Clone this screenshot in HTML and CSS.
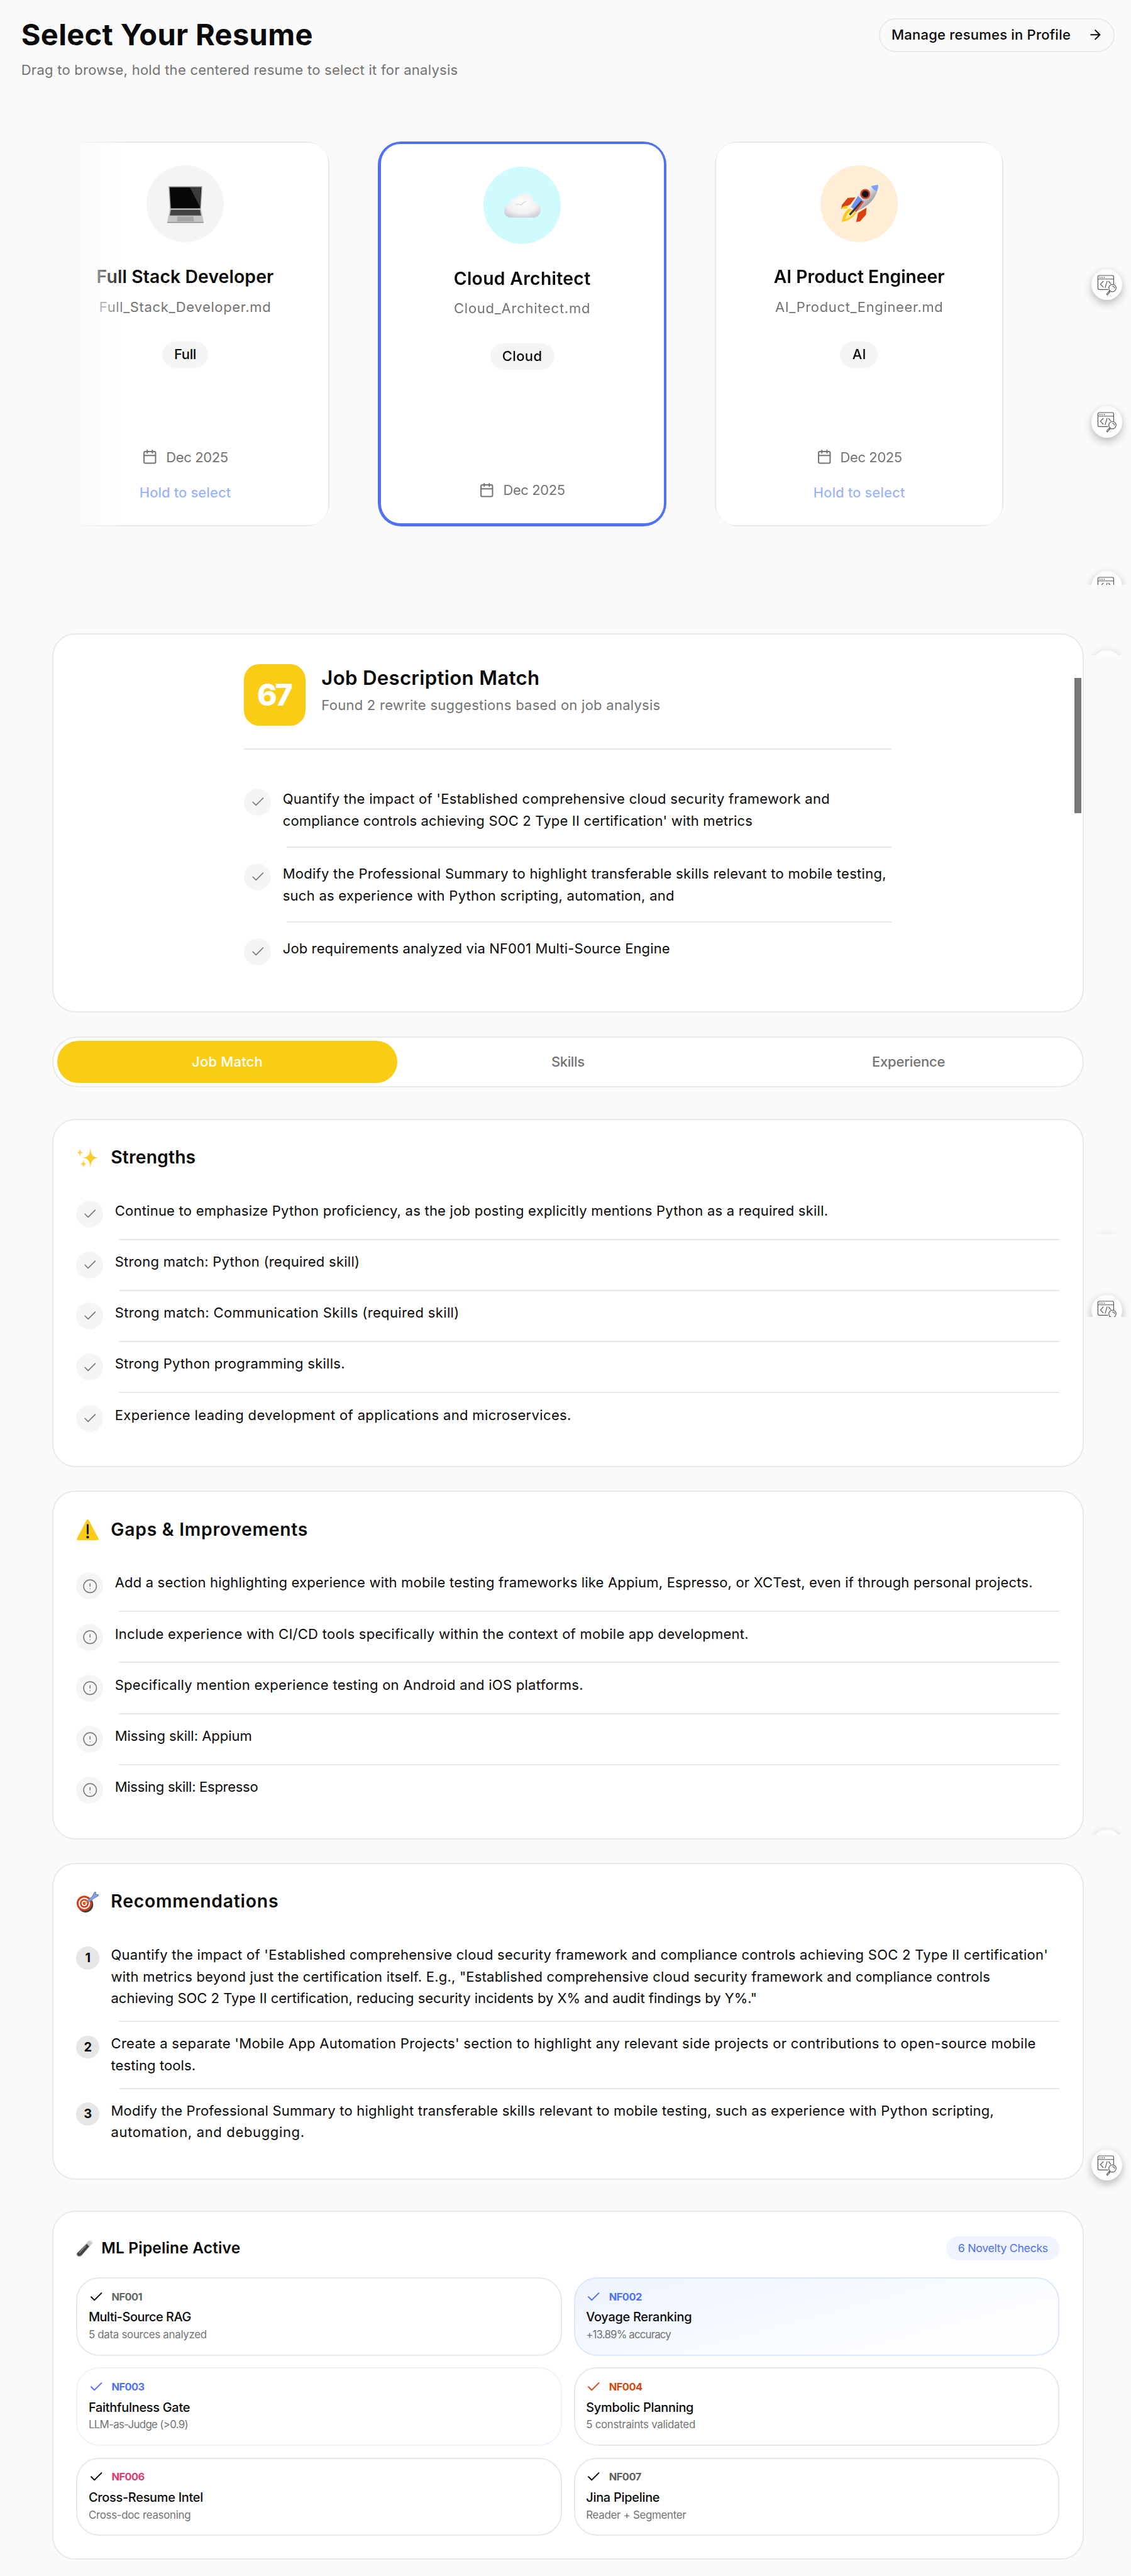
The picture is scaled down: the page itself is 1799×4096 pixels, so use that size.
FILE: index.html
```html
<!DOCTYPE html>
<html lang="en">
<head>
<meta charset="utf-8">
<title>Select Your Resume</title>
<link rel="stylesheet" href="styles.css">
</head>
<body>
<svg class="defs" width="0" height="0" aria-hidden="true">
  <symbol id="check" viewBox="0 0 24 24"><path d="M20 6 9 17l-5-5"/></symbol>
  <symbol id="alert" viewBox="0 0 24 24"><circle cx="12" cy="12" r="10"/><path d="M12 8v4M12 16h.01"/></symbol>
  <symbol id="calendar" viewBox="0 0 24 24"><rect x="3" y="4" width="18" height="18" rx="2"/><path d="M8 2v4M16 2v4M3 10h18"/></symbol>
  <symbol id="inspect" viewBox="0 0 64 64">
    <path d="M34 42H16.500q-3 0-3-3V16q0-3 3-3h26.500q3 0 3 3v15M13.500 20.500h32.500"/>
    <path d="M17.500 17h.1M22 17h.1M26.500 17h.1" stroke-width="2.200"/>
    <path d="m24.500 25-6 6 6 6M32.500 24.500 28.500 38M35.500 25l4.500 5"/>
    <circle cx="43.500" cy="39" r="7.500"/>
    <path d="M43.500 35a4 4 0 0 1 4 4M38 44.500l-2 2M36.500 45.500l-4.500 5q-1 2 1 2.500l5.500-6z"/>
  </symbol>
</svg>

<header class="header">
  <div>
    <h1 class="header-title">Select Your Resume</h1>
    <p class="header-sub">Drag to browse, hold the centered resume to select it for analysis</p>
  </div>
  <a class="manage"><span>Manage resumes in Profile</span>
    <svg class="icon arrow" viewBox="0 0 24 24"><path d="M5 12h14M12 5l7 7-7 7"/></svg>
  </a>
</header>

<section class="carousel">
  <article class="resume">
    <div class="resume-body">
      <div class="avatar avatar-gray">
        <svg viewBox="0 0 60 60" width="62" height="62">
          <path d="M4 3h52l-2 35H6z" fill="#a9a9a9"/><path d="M5.500 4.500h49L52.500 37h-45z" fill="#080808"/>
          <path d="M37 5h17L52 34z" fill="#3b3b3b"/>
          <path d="M6 38h48l4 20q0 1-2 1H4q-2 0-2-1z" fill="#c3c3c3"/>
          <path d="M7.500 39.500h45l1.500 8.500H6z" fill="#2a2a2a"/>
          <path d="M7 41.500h46M6.500 43.700h47M6.200 46h47.600" stroke="#8d8d8d" stroke-width=".6"/>
          <path d="M18 49.500h24l1 7.500H17z" fill="#a6a6a6"/><path d="M2 58h56v1.500H2z" fill="#8e8e8e"/>
        </svg>
      </div>
      <h2 class="resume-title">Full Stack Developer</h2>
      <p class="resume-file">Full_Stack_Developer.md</p>
      <span class="tag k-18">Full</span>
      <div class="date"><svg class="icon"><use href="#calendar"/></svg><span>Dec 2025</span></div>
      <p class="hold">Hold to select</p>
    </div>
  </article>
  <article class="resume resume-active">
    <div class="resume-body">
      <div class="avatar avatar-cyan">
        <svg viewBox="0 0 60 40" width="60" height="52">
          <defs><radialGradient id="cl" cx=".5" cy=".4" r=".7"><stop offset="0" stop-color="#fdfdfd"/><stop offset=".6" stop-color="#f1f1f2"/><stop offset="1" stop-color="#c3c6cf"/></radialGradient></defs>
          <path d="M13 39C5 39 1 35 1 28s5-11 10-11c-1-6 3-10 9-9C22 3 28 0 34 0c8 0 14 6 13 14 8 0 12 5 12 12s-5 13-12 13z" fill="url(#cl)"/>
          <path d="M19 19q4-3 9 0 3-4 8-6" fill="none" stroke="#dadade" stroke-width="1.500"/>
        </svg>
      </div>
      <h2 class="resume-title t-wide">Cloud Architect</h2>
      <p class="resume-file k99">Cloud_Architect.md</p>
      <span class="tag k66">Cloud</span>
      <div class="date"><svg class="icon"><use href="#calendar"/></svg><span>Dec 2025</span></div>
    </div>
  </article>
  <article class="resume">
    <div class="resume-body">
      <div class="avatar avatar-orange">
        <svg viewBox="0 0 60 60" width="62" height="62">
          <defs><linearGradient id="rk" x1="0" y1="0" x2="1" y2="1"><stop offset="0" stop-color="#8d8d90"/><stop offset=".4" stop-color="#ececef"/><stop offset="1" stop-color="#4a4a4f"/></linearGradient></defs>
          <path d="M16 31 2 38l1-6 9-11 12-1z" fill="#d8400f"/><path d="M28 44 25 58l6-1 9-10 1-11z" fill="#d8400f"/>
          <path d="M2 37c3-3 6-4 10-4l-1 5z" fill="#f9cf1c"/>
          <path d="M15 37C8 41 4 49 3 58c9-2 17-6 22-14z" fill="#fac51c"/><path d="M17 40c-5 4-8 9-9 14 6-2 11-5 14-10z" fill="#fde889"/>
          <path d="M59 1C43 2 27 13 17 35q2 5 7 7C45 34 58 20 59 1z" fill="url(#rk)"/>
          <path d="M59 1c-4 0-7 1-11 2q3 6 9 8 2-5 2-10z" fill="#7ba0f6"/>
          <path d="M28 18 17 35l5 3 13-13z" fill="#6c94ee"/>
          <path d="M34 26 15 47" stroke="#34343a" stroke-width="3"/><path d="M36 26 24 42" stroke="#e2482a" stroke-width="2.500"/>
          <circle cx="39" cy="15" r="6.500" fill="#151515" stroke="#da3f20" stroke-width="2.500"/>
        </svg>
      </div>
      <h2 class="resume-title t-tight">AI Product Engineer</h2>
      <p class="resume-file">AI_Product_Engineer.md</p>
      <span class="tag">AI</span>
      <div class="date"><svg class="icon"><use href="#calendar"/></svg><span>Dec 2025</span></div>
      <p class="hold">Hold to select</p>
    </div>
  </article>
  <article class="resume"><div class="resume-body"></div></article>
</section>

<main class="main">
  <section class="panel match">
    <div class="match-inner">
      <div class="match-head">
        <div class="score">67</div>
        <div>
          <h2 class="match-title">Job Description Match</h2>
          <p class="match-sub">Found 2 rewrite suggestions based on job analysis</p>
        </div>
      </div>
      <ul class="list list-wide">
        <li><i class="dot"><svg class="icon"><use href="#check"/></svg></i><p><span class="k54">Quantify the impact of 'Established comprehensive cloud security framework and</span><br><span class="k42">compliance controls achieving SOC 2 Type II certification' with metrics</span></p></li>
        <li><i class="dot"><svg class="icon"><use href="#check"/></svg></i><p>Modify the Professional Summary to highlight transferable skills relevant to mobile testing,<br>such as experience with Python scripting, automation, and</p></li>
        <li><i class="dot"><svg class="icon"><use href="#check"/></svg></i><p class="k37">Job requirements analyzed via NF001 Multi-Source Engine</p></li>
      </ul>
    </div>
    <div class="thumb"></div>
  </section>

  <nav class="tabs">
    <a class="tab tab-active k42">Job Match</a>
    <a class="tab k-18">Skills</a>
    <a class="tab k5">Experience</a>
  </nav>

  <section class="panel">
    <h2 class="panel-title"><svg class="emoji" viewBox="0 0 36 36">
      <path d="M22.500 1c1 11 3 15 12.500 16.500C25.500 19 23.500 23 22.500 34 21.500 23 19.500 19 10 17.500 19.500 16 21.500 12 22.500 1z" fill="#fbcb2a"/>
      <path d="M5.500 2c.5 5 1.500 6.500 5.500 7-4 .6-5 2-5.500 7C5 11 4 9.600 0 9c4-.5 5-2 5.500-7z" fill="#fbcf4a"/>
      <path d="M11 20c.5 5 1.500 7 5.500 7.600-4 .6-5 2.400-5.500 7.400-.5-5-1.500-6.800-5.500-7.400C9.500 27 10.500 25 11 20z" fill="#fbcf4a"/>
    </svg>Strengths</h2>
    <ul class="list">
      <li><i class="dot"><svg class="icon"><use href="#check"/></svg></i><p class="k47">Continue to emphasize Python proficiency, as the job posting explicitly mentions Python as a required skill.</p></li>
      <li><i class="dot"><svg class="icon"><use href="#check"/></svg></i><p>Strong match: Python (required skill)</p></li>
      <li><i class="dot"><svg class="icon"><use href="#check"/></svg></i><p class="k60">Strong match: Communication Skills (required skill)</p></li>
      <li><i class="dot"><svg class="icon"><use href="#check"/></svg></i><p>Strong Python programming skills.</p></li>
      <li><i class="dot"><svg class="icon"><use href="#check"/></svg></i><p class="k60">Experience leading development of applications and microservices.</p></li>
    </ul>
  </section>

  <section class="panel">
    <h2 class="panel-title t-gaps"><svg class="emoji" viewBox="0 0 36 36">
      <path d="M16 2.500q2-3 4 0L35.500 32q1 3-2 3h-31q-3 0-2-3z" fill="#fbcc17"/>
      <path d="M18 10v14" stroke="#1c1c1c" stroke-width="3.200" stroke-linecap="round"/><circle cx="18" cy="30" r="2.200" fill="#1c1c1c"/>
    </svg>Gaps &amp; Improvements</h2>
    <ul class="list">
      <li><i class="dot"><svg class="icon"><use href="#alert"/></svg></i><p class="k42">Add a section highlighting experience with mobile testing frameworks like Appium, Espresso, or XCTest, even if through personal projects.</p></li>
      <li><i class="dot"><svg class="icon"><use href="#alert"/></svg></i><p>Include experience with CI/CD tools specifically within the context of mobile app development.</p></li>
      <li><i class="dot"><svg class="icon"><use href="#alert"/></svg></i><p>Specifically mention experience testing on Android and iOS platforms.</p></li>
      <li><i class="dot"><svg class="icon"><use href="#alert"/></svg></i><p class="k22">Missing skill: Appium</p></li>
      <li><i class="dot"><svg class="icon"><use href="#alert"/></svg></i><p class="k0">Missing skill: Espresso</p></li>
    </ul>
  </section>

  <section class="panel">
    <h2 class="panel-title t-recs"><svg class="emoji" viewBox="0 0 36 36">
      <ellipse cx="14.500" cy="22" rx="12.500" ry="13" fill="#3c3f3c"/>
      <circle cx="12.500" cy="20" r="12.500" fill="#d93a12"/><circle cx="12.500" cy="20" r="9.500" fill="#fff"/><circle cx="12.500" cy="20" r="7.200" fill="#d93a12"/><circle cx="12.500" cy="20" r="4.600" fill="#fff"/><circle cx="12.500" cy="20" r="2.500" fill="#d93a12"/>
      <path d="M12.500 20 28 8" stroke="#d9a520" stroke-width="1.800"/>
      <path d="m17 16 8-7 4-7 2-1 .5 4.500L36 6l-1 2-7 4-8 6z" fill="#7f9fe6" stroke="#5b6783" stroke-width=".8"/>
    </svg>Recommendations</h2>
    <ol class="recs">
      <li><i class="num">1</i><p>Quantify the impact of 'Established comprehensive cloud security framework and compliance controls achieving SOC 2 Type II certification'<br><span class="k43">with metrics beyond just the certification itself. E.g., "Established comprehensive cloud security framework and compliance controls</span><br><span class="k22">achieving SOC 2 Type II certification, reducing security incidents by X% and audit findings by Y%."</span></p></li>
      <li><i class="num">2</i><p><span class="k56">Create a separate 'Mobile App Automation Projects' section to highlight any relevant side projects or contributions to open-source mobile</span><br><span class="k33">testing tools.</span></p></li>
      <li><i class="num">3</i><p><span class="k45">Modify the Professional Summary to highlight transferable skills relevant to mobile testing, such as experience with Python scripting,</span><br><span class="k90">automation, and debugging.</span></p></li>
    </ol>
  </section>

  <section class="panel pipeline">
    <div class="pipe-head">
      <h2 class="pipe-title"><svg viewBox="0 0 28 28" width="28" height="28">
        <path d="M24 1 27 4.500 9 26q-3 3-6.500 1T1 21.500L20 2z" fill="#c9c9c9"/>
        <path d="M17 7l4 4L8.500 25q-3 2.500-5.500.8T2 21.500z" fill="#444"/><path d="M15.500 10 5 21.500" stroke="#8b8b8b" stroke-width="1.500"/><path d="M22 1.500 27 5" stroke="#ededed" stroke-width="2"/>
      </svg>ML Pipeline Active</h2>
      <span class="badge">6 Novelty Checks</span>
    </div>
    <div class="grid">
      <div class="cell"><div class="code c-gray"><svg class="icon"><use href="#check"/></svg><b>NF001</b></div><h3 class="k-45">Multi-Source RAG</h3><p>5 data sources analyzed</p></div>
      <div class="cell cell-blue"><div class="code c-blue"><svg class="icon"><use href="#check"/></svg><b>NF002</b></div><h3>Voyage Reranking</h3><p class="k-80">+13.89% accuracy</p></div>
      <div class="cell cell-pale"><div class="code c-blue"><svg class="icon"><use href="#check"/></svg><b>NF003</b></div><h3>Faithfulness Gate</h3><p class="k-70">LLM-as-Judge (&gt;0.9)</p></div>
      <div class="cell"><div class="code c-orange"><svg class="icon"><use href="#check"/></svg><b>NF004</b></div><h3>Symbolic Planning</h3><p>5 constraints validated</p></div>
      <div class="cell"><div class="code c-pink"><svg class="icon"><use href="#check"/></svg><b>NF006</b></div><h3>Cross-Resume Intel</h3><p>Cross-doc reasoning</p></div>
      <div class="cell"><div class="code c-dark"><svg class="icon"><use href="#check"/></svg><b>NF007</b></div><h3>Jina Pipeline</h3><p>Reader + Segmenter</p></div>
    </div>
  </section>
</main>

<div class="fab-clip fab-1"><div class="fab"><svg><use href="#inspect"/></svg></div></div>
<div class="fab-clip fab-2"><div class="fab"><svg><use href="#inspect"/></svg></div></div>
<div class="fab-clip fab-3"><div class="fab"><svg><use href="#inspect"/></svg></div></div>
<div class="fab-clip fab-4"><div class="fab"><svg><use href="#inspect"/></svg></div></div>
<div class="fab-clip fab-5"><div class="fab"><svg><use href="#inspect"/></svg></div></div>
<div class="fab-clip fab-6"><div class="fab"><svg><use href="#inspect"/></svg></div></div>
<div class="fab-clip fab-7"><div class="fab"><svg><use href="#inspect"/></svg></div></div>
<div class="fab-clip fab-8"><div class="fab"><svg><use href="#inspect"/></svg></div></div>
</body>
</html>
```
FILE: styles.css
```css
* { box-sizing: border-box; }
body {
  margin: 0;
  height: 4096px;
  position: relative;
  overflow: hidden;
  background: #fafafa;
  color: #0a0a0a;
  font: 400 22px/34.86px Inter, "Open Sans", sans-serif;
  letter-spacing: .265px;
}
h1, h2, h3, p, ul, ol { margin: 0; padding: 0; }
ul, ol { list-style: none; }
i { font-style: normal; }
.defs { position: absolute; }
.icon {
  width: 24.5px;
  height: 24.5px;
  flex: none;
  fill: none;
  stroke: currentColor;
  stroke-width: 1.5;
  stroke-linecap: round;
  stroke-linejoin: round;
}

/* Tracking steps, tightest to widest */
.k-80 { letter-spacing: -.85px !important; }
.k-70 { letter-spacing: -.7px !important; }
.k-45 { letter-spacing: -.45px !important; }
.k-18 { letter-spacing: -.4px !important; }
.k0 { letter-spacing: -.28px !important; }
.k5 { letter-spacing: -.2px !important; }
.k22 { letter-spacing: -.01px !important; }
.k33 { letter-spacing: .1px !important; }
.k37 { letter-spacing: .13px !important; }
.k42 { letter-spacing: .18px !important; }
.k43 { letter-spacing: .2px !important; }
.k45 { letter-spacing: .21px !important; }
.k47 { letter-spacing: .235px !important; }
.k54 { letter-spacing: .3px !important; }
.k56 { letter-spacing: .325px !important; }
.k60 { letter-spacing: .36px !important; }
.k66 { letter-spacing: .4px !important; }
.k90 { letter-spacing: .65px !important; }
.k99 { letter-spacing: .74px !important; }

/* Header */
.header {
  display: flex;
  justify-content: space-between;
  align-items: flex-start;
  padding: 27.3px 26.5px 0 33.7px;
  height: 224.5px;
}
.header-title { font-size: 47px; line-height: 56px; font-weight: 700; letter-spacing: .35px; }
.header-sub { margin-top: 12px; line-height: 32px; color: #737373; }
.manage {
  display: flex;
  align-items: center;
  justify-content: space-between;
  width: 375px;
  height: 54.5px;
  margin-top: 1.5px;
  padding: 0 16px 2px 18.5px;
  border: 2px solid #e9e9e9;
  border-radius: 28px;
  font-weight: 500;
  letter-spacing: .22px;
}
.arrow { stroke-width: 2; }

/* Carousel */
.carousel {
  display: flex;
  gap: 77.1px;
  height: 612.5px;
  padding-left: 65px;
  overflow: hidden;
  -webkit-mask-image: linear-gradient(90deg, transparent 120px, #000 200px, #000 1610px, rgba(0,0,0,.08) 1672px, transparent 1684px);
  mask-image: linear-gradient(90deg, transparent 120px, #000 200px, #000 1610px, rgba(0,0,0,.08) 1672px, transparent 1684px);
}
.resume {
  flex: none;
  width: 459px;
  padding: 2px;
  background: #e7e7e7;
  border-radius: 36.8px;
  overflow: hidden;
}
.resume-active { padding: 4.6px; background: #4f71f5; }
.resume-body {
  display: flex;
  flex-direction: column;
  align-items: center;
  height: 100%;
  padding: 36.4px 0;
  background: #fff;
  border-radius: 31px;
}
.avatar {
  display: flex;
  align-items: center;
  justify-content: center;
  width: 122.6px;
  height: 122.6px;
  border-radius: 50%;
}
.avatar-gray { background: #f4f4f4; }
.avatar-cyan { background: #cffafe; }
.avatar-orange { background: #ffedd5; }
.resume-title { margin-top: 34px; font-size: 28.3px; line-height: 43px; font-weight: 600; letter-spacing: .13px; }
.t-wide { letter-spacing: .32px; }
.t-tight { letter-spacing: 0; }
.resume-file { margin-top: 9.4px; line-height: 32px; color: #737373; letter-spacing: .63px; }
.tag {
  margin-top: 39.6px;
  height: 42px;
  padding: 0 19.2px;
  border-radius: 21px;
  background: #f5f5f5;
  font-weight: 500;
  line-height: 41px;
}
.date {
  display: flex;
  align-items: center;
  gap: 13.5px;
  margin-top: auto;
  line-height: 32px;
  color: #737373;
  letter-spacing: -.4px;
}
.date .icon { stroke-width: 2; }
.resume-active .date { margin-bottom: 1px; }
.hold { margin-top: 24px; line-height: 32px; font-weight: 500; color: #9ab5fb; letter-spacing: .08px; }

/* Panels */
.main { width: 1640.6px; margin: 169.7px 0 0 83px; }
.panel {
  position: relative;
  margin-bottom: 37.4px;
  padding: 36.3px;
  background: #fff;
  border: 2px solid #e9e9e9;
  border-radius: 36.8px;
}
.panel-title {
  display: flex;
  align-items: center;
  gap: 19px;
  height: 73.3px;
  padding: 0 0 27px 1px;
  font-size: 28.3px;
  font-weight: 600;
  letter-spacing: .15px;
}
.t-gaps { letter-spacing: .75px; }
.t-recs { letter-spacing: .8px; }
.emoji { width: 35px; height: 35px; margin-top: 2px; }

.match { height: 603.3px; margin-bottom: 37.8px; padding: 47.8px 0; }
.match-inner { width: 1030px; margin: 0 auto; }
.match-head {
  display: flex;
  gap: 25px;
  height: 136px;
  border-bottom: 2px solid #e8e8e8;
}
.score {
  width: 98px;
  height: 98px;
  border-radius: 24.5px;
  background: #facc15;
  color: #fff;
  font-size: 48px;
  font-weight: 800;
  line-height: 98px;
  letter-spacing: -3.2px;
  text-indent: -3px;
  text-align: center;
}
.match-title { margin-top: 2px; font-size: 31.2px; line-height: 40px; font-weight: 600; letter-spacing: .3px; }
.match-sub { margin-top: 7px; line-height: 32px; color: #737373; }
.thumb {
  position: absolute;
  top: 69px;
  right: 2px;
  width: 11px;
  height: 215px;
  background: #787878;
}

.list li {
  position: relative;
  display: flex;
  gap: 18.4px;
  height: 81.2px;
  padding-top: 18.4px;
}
.list li:last-child { height: 79.7px; }
.list li:not(:last-child)::after,
.recs li:not(:last-child)::after {
  content: "";
  position: absolute;
  left: 67.4px;
  right: 0;
  bottom: 0;
  height: 2px;
  background: #e8e8e8;
}
.list p { margin-top: -1px; white-space: nowrap; }
.list-wide { padding-top: 37px; }
.list-wide li { height: 118.9px; padding-top: 24.5px; }
.list-wide li:last-child { height: 92px; }
.dot {
  display: flex;
  align-items: center;
  justify-content: center;
  flex: none;
  width: 43px;
  height: 43px;
  border-radius: 50%;
  background: #f5f5f5;
  color: #737373;
}

/* Tabs */
.tabs {
  display: grid;
  grid-template-columns: repeat(3, 1fr);
  height: 81.4px;
  margin-bottom: 49.6px;
  padding: 5.6px;
  background: #fff;
  border: 2px solid #e9e9e9;
  border-radius: 41px;
}
.tab {
  display: flex;
  align-items: center;
  justify-content: center;
  padding-bottom: 1px;
  border-radius: 34px;
  color: #737373;
  font-weight: 500;
}
.tab-active { background: #facc15; color: #fff; }

/* Recommendations */
.recs li { position: relative; display: flex; gap: 18.4px; padding: 18.4px 0; }
.recs p { margin-top: -1.5px; margin-bottom: 1.5px; white-space: nowrap; }
.num {
  flex: none;
  width: 36.8px;
  height: 36.8px;
  margin-top: 3px;
  border-radius: 50%;
  background: #e6e6e6;
  font-size: 20px;
  font-weight: 700;
  line-height: 36px;
  letter-spacing: 0;
  text-align: center;
}

/* Pipeline */
.pipeline { height: 555px; margin-top: 49px; }
.pipe-head {
  display: flex;
  align-items: center;
  justify-content: space-between;
  height: 42px;
  margin-bottom: 25.2px;
}
.pipe-title { display: flex; align-items: center; gap: 12px; font-size: 24.5px; font-weight: 600; letter-spacing: .15px; }
.badge {
  height: 37.6px;
  padding: 0 18.4px;
  border-radius: 19px;
  background: #eff4ff;
  color: #4f71f5;
  font-size: 17.8px;
  line-height: 37px;
  letter-spacing: -.35px;
}
.grid { display: grid; grid-template-columns: 1fr 1fr; gap: 18.7px; }
.cell {
  height: 124.6px;
  padding: 16.8px 17.6px;
  border: 2px solid #e9e9e9;
  border-radius: 36.8px;
}
.cell-blue { border-color: #dbe7ff; background: linear-gradient(165deg, #eef3ff, #f8fbff 55%, #fff); }
.cell-pale { border-color: #eff3fc; }
.code { display: flex; align-items: center; gap: 12px; height: 24.5px; color: #0a0a0a; }
.code .icon { stroke-width: 2; }
.code b { font-size: 16.4px; font-weight: 700; letter-spacing: -.5px; }
.c-gray b { color: #5f6866; }
.c-dark b { color: #5e5e5e; }
.c-blue { color: #4f71f5; }
.c-orange { color: #d4480d; }
.c-pink b { color: #dc3b72; }
.cell h3 { margin-top: 5px; font-size: 19.9px; line-height: 30px; font-weight: 500; letter-spacing: -.26px; }
.cell p { margin-top: .8px; font-size: 16.9px; line-height: 25px; color: #737373; letter-spacing: -.3px; }

/* Floating inspector buttons */
.fab-clip { position: absolute; left: 1706px; right: 0; padding: 16px 0 0 30px; height: 100px; overflow: hidden; }
.fab {
  width: 49.3px;
  height: 49.3px;
  border-radius: 50%;
  background: #fdfdfd;
  box-shadow: 0 6px 14px rgba(0,0,0,.24), 0 0 12px rgba(0,0,0,.05);
}
.fab svg { display: block; width: 49.3px; height: 49.3px; fill: none; stroke: #555; stroke-width: 1.5; stroke-linecap: round; stroke-linejoin: round; }
.fab-1 { top: 411.5px; }
.fab-2 { top: 630.3px; }
.fab-3 { top: 892.2px; height: 37.5px; }
.fab-4 { top: 1018px; height: 24px; }
.fab-5 { top: 1946px; height: 8.5px; }
.fab-6 { top: 2042.7px; height: 51.2px; }
.fab-7 { top: 2892.6px; height: 24.4px; }
.fab-8 { top: 3402px; }
```
